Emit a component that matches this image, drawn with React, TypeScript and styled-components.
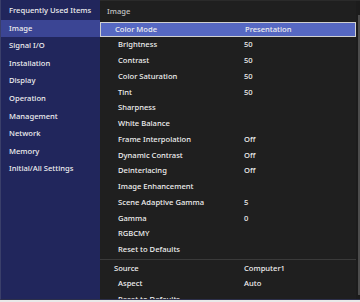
import styled, { createGlobalStyle } from 'styled-components';

const GlobalStyle = createGlobalStyle`
body {
  margin: 0;
  background: #e9e9e9;
}
* { box-sizing: border-box; }
`

const menu = [
  'Frequently Used Items',
  'Image',
  'Signal I/O',
  'Installation',
  'Display',
  'Operation',
  'Management',
  'Network',
  'Memory',
  'Initial/All Settings',
]

type Item = { label: string; value?: string; level: number; selected?: boolean; divider?: boolean }

const items: Item[] = [
  { label: 'Color Mode', value: 'Presentation', level: 0, selected: true },
  { label: 'Brightness', value: '50', level: 1 },
  { label: 'Contrast', value: '50', level: 1 },
  { label: 'Color Saturation', value: '50', level: 1 },
  { label: 'Tint', value: '50', level: 1 },
  { label: 'Sharpness', level: 1 },
  { label: 'White Balance', level: 1 },
  { label: 'Frame Interpolation', value: 'Off', level: 1 },
  { label: 'Dynamic Contrast', value: 'Off', level: 1 },
  { label: 'Deinterlacing', value: 'Off', level: 1 },
  { label: 'Image Enhancement', level: 1 },
  { label: 'Scene Adaptive Gamma', value: '5', level: 1 },
  { label: 'Gamma', value: '0', level: 1 },
  { label: 'RGBCMY', level: 1 },
  { label: 'Reset to Defaults', level: 1 },
  { label: 'Source', value: 'Computer1', level: 0, divider: true },
  { label: 'Aspect', value: 'Auto', level: 1 },
  { label: 'Reset to Defaults', level: 1 },
]

const App = () => {
  return (
    <>
      <GlobalStyle />
      <Frame>
        <Sidebar>
          {menu.map((m) => (
            <SideItem key={m} $active={m === 'Image'}>{m}</SideItem>
          ))}
        </Sidebar>
        <Main>
          <List>
            <Header>Image</Header>
            {items.map((it, i) => (
              <Row key={i} $selected={it.selected} $divider={it.divider}>
                <Label $level={it.level}>{it.label}</Label>
                <Value>{it.value}</Value>
              </Row>
            ))}
          </List>
          <ScrollTrack>
            <ScrollThumb />
          </ScrollTrack>
        </Main>
      </Frame>
    </>
  )
}

export default App

const Frame = styled.div`
width: 360px;
height: 300px;
display: flex;
overflow: hidden;
font-family: 'Noto Sans', 'Open Sans', sans-serif;
font-size: 7.6px;
font-weight: 500;
color: #efefef;
border-left: 1px solid #3a3f6a;
border-bottom: 1px solid #2c2f4a;
`

const Sidebar = styled.div`
width: 99px;
flex-shrink: 0;
background: #21265c;
padding-top: 2px;
`

const SideItem = styled.div<{ $active?: boolean }>`
height: 17.6px;
line-height: 17.6px;
padding-left: 8px;
white-space: nowrap;
background: ${(p) => (p.$active ? '#3b4594' : 'transparent')};
`

const Main = styled.div`
flex: 1;
display: flex;
background: #1f1f1f;
border-top: 1px solid #2a2a2a;
`

const List = styled.div`
width: 256px;
flex-shrink: 0;
`

const Header = styled.div`
height: 20.6px;
line-height: 20.6px;
padding-left: 7px;
color: #c4c4c4;
`

const Row = styled.div<{ $selected?: boolean; $divider?: boolean }>`
display: grid;
grid-template-columns: 144px 1fr;
height: 15.75px;
line-height: ${(p) => (p.$selected ? '13.75px' : '15.75px')};
white-space: nowrap;
background: ${(p) => (p.$selected ? '#5668c2' : 'transparent')};
border: ${(p) => (p.$selected ? '1px solid #d0d0d0' : 'none')};
${(p) => p.$divider && 'border-top: 1px solid #3a3a3a; margin-top: 1px; line-height: 16px; height: 17px;'}
`

const Label = styled.span<{ $level: number }>`
padding-left: ${(p) => (p.$level ? 18 : 14)}px;
`

const Value = styled.span``

const ScrollTrack = styled.div`
flex: 1;
padding: 14px 1px 4px 1px;
background: #1c1c1c;
`

const ScrollThumb = styled.div`
width: 2px;
height: 100%;
margin-left: 1px;
background: #4d4d4d;
`
